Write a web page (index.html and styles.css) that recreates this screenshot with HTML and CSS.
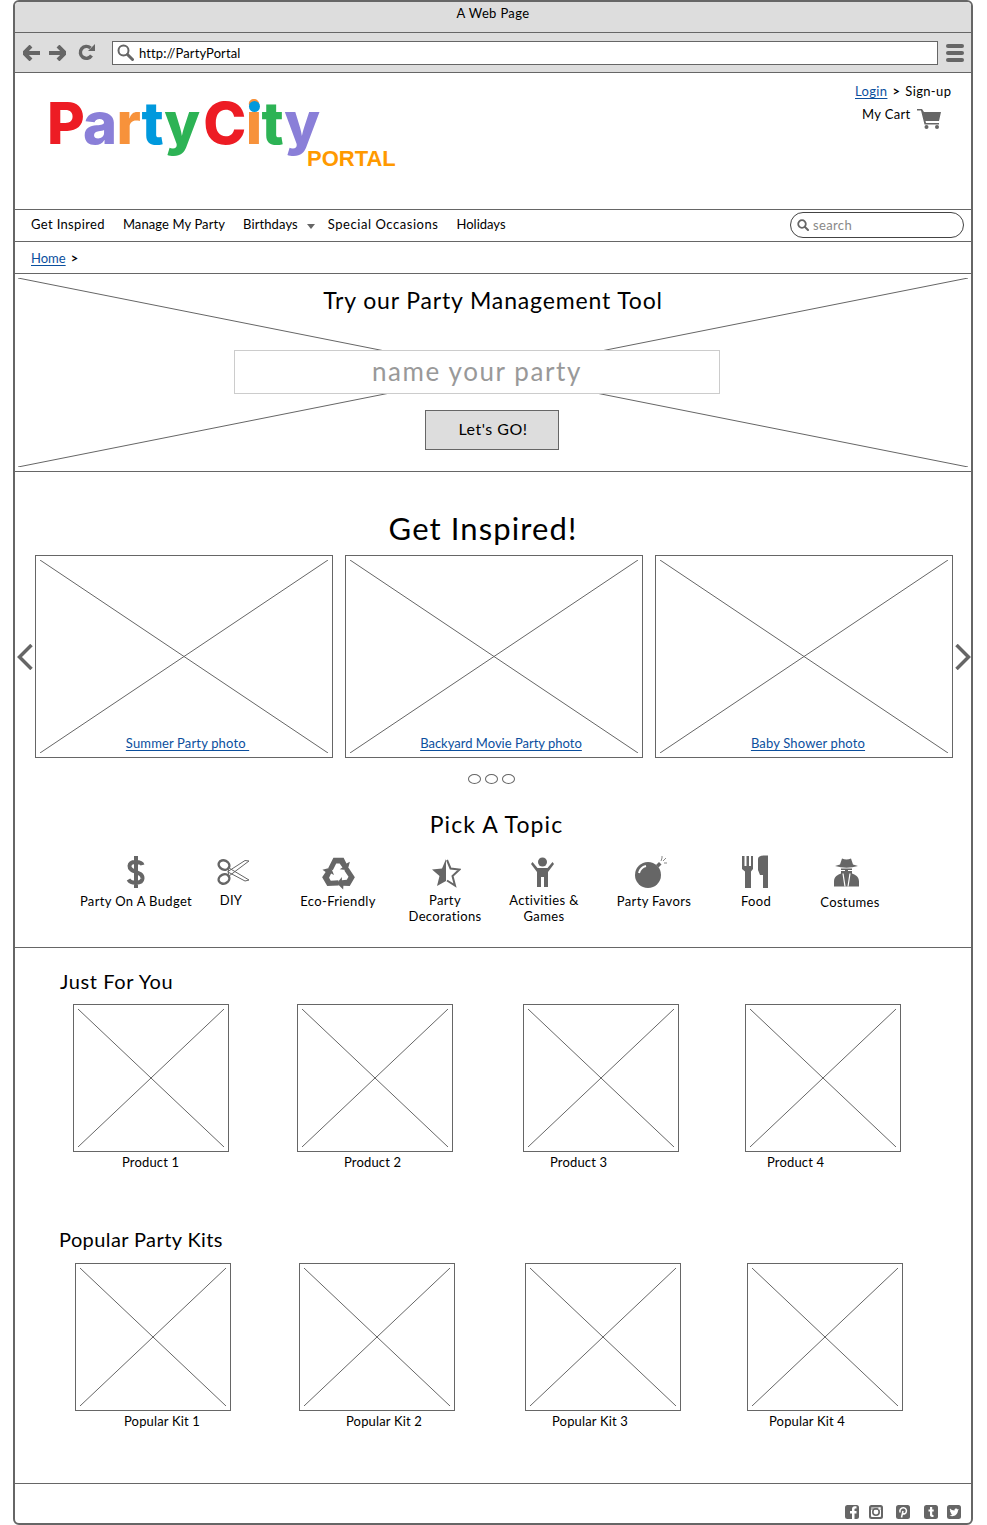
FILE: index.html
```html
<!DOCTYPE html>
<html lang="en">
<head>
    <meta charset="UTF-8">
    <title>PartyPortal</title>
    <link rel="stylesheet" href="styles.css">
</head>
<body>
    <div class="window">
        <div class="titlebar">A Web Page</div>
        <div class="toolbar">
            <svg class="tool-icon" width="18" height="16" viewBox="0 0 18 16"><path d="M8 1L1 8l7 7M2 8h15" fill="none" stroke="#666" stroke-width="4" stroke-linejoin="round"/></svg>
            <svg class="tool-icon" width="18" height="16" viewBox="0 0 18 16"><path d="M10 1l7 7-7 7M16 8H1" fill="none" stroke="#666" stroke-width="4" stroke-linejoin="round"/></svg>
            <svg class="tool-icon reload" width="17" height="17" viewBox="0 0 17 17"><path d="M13.5 11.5A6 6 0 1 1 12.5 4" fill="none" stroke="#666" stroke-width="3.4"/><path d="M10 7h7V0z" fill="#666"/></svg>
            <div class="urlbar">
                <svg width="17" height="17" viewBox="0 0 17 17"><circle cx="6.5" cy="6.5" r="5" fill="none" stroke="#666" stroke-width="2"/><path d="M10.5 10.5l5 5" stroke="#666" stroke-width="3" stroke-linecap="round"/></svg>
                <span>http://PartyPortal</span>
            </div>
            <div class="hamburger"><i></i><i></i><i></i></div>
        </div>

        <header class="site-header">
            <div class="logo">
                <div class="logo-name"><span class="red">P</span><span class="purple">a</span><span class="orange">r</span><span class="blue">t</span><span class="green">y</span><span class="red gap-c">C</span><span class="orange dot-i">i</span><span class="green">t</span><span class="purple">y</span></div>
                <div class="logo-portal">PORTAL</div>
            </div>
            <div class="account">
                <div class="account-login"><a href="#">Login</a><span class="crumb-sep">&gt;</span><span>Sign-up</span></div>
                <div class="account-cart">
                    <span>My Cart</span>
                    <svg width="24" height="21" viewBox="0 0 24 21"><path d="M0 1h5l2 3h17l-2 9H8.500l.5 2h13v1.500H7.500L4 2.500H0z" fill="#666"/><circle cx="9.500" cy="19" r="2" fill="#666"/><circle cx="20" cy="19" r="2" fill="#666"/></svg>
                </div>
            </div>
        </header>

        <nav class="mainnav">
            <a href="#">Get Inspired</a>
            <a href="#">Manage My Party</a>
            <a href="#" class="has-caret">Birthdays</a>
            <a href="#">Special Occasions</a>
            <a href="#">Holidays</a>
            <div class="search">
                <svg width="12" height="12" viewBox="0 0 12 12"><circle cx="5" cy="5" r="3.800" fill="none" stroke="#666" stroke-width="1.800"/><path d="M8 8l3 3" stroke="#666" stroke-width="2" stroke-linecap="round"/></svg>
                <span>search</span>
            </div>
        </nav>

        <div class="breadcrumb"><a href="#">Home</a><span class="crumb-sep">&gt;</span></div>

        <section class="hero">
            <svg class="hero-x" viewBox="0 0 100 100" preserveAspectRatio="none"><path d="M0 0L100 100M100 0L0 100" vector-effect="non-scaling-stroke"/></svg>
            <h2 class="hero-title">Try our Party Management Tool</h2>
            <div class="hero-input">name your party</div>
            <button type="button" class="hero-btn">Let's GO!</button>
        </section>

        <section class="inspired">
            <h1 class="inspired-title">Get Inspired!</h1>
            <div class="carousel">
                <svg class="arrow" width="17" height="26" viewBox="0 0 17 26"><path d="M15 1L3 13l12 12" fill="none" stroke="#666" stroke-width="3.500"/></svg>
                <div class="slides">
                    <div class="ph slide">
                        <svg viewBox="0 0 100 100" preserveAspectRatio="none"><path d="M0 0L100 100M100 0L0 100" vector-effect="non-scaling-stroke"/></svg>
                        <a href="#" class="slide-cap">Summer Party photo&nbsp;</a>
                    </div>
                    <div class="ph slide">
                        <svg viewBox="0 0 100 100" preserveAspectRatio="none"><path d="M0 0L100 100M100 0L0 100" vector-effect="non-scaling-stroke"/></svg>
                        <a href="#" class="slide-cap">Backyard Movie Party photo</a>
                    </div>
                    <div class="ph slide">
                        <svg viewBox="0 0 100 100" preserveAspectRatio="none"><path d="M0 0L100 100M100 0L0 100" vector-effect="non-scaling-stroke"/></svg>
                        <a href="#" class="slide-cap">Baby Shower photo</a>
                    </div>
                </div>
                <svg class="arrow" width="17" height="26" viewBox="0 0 17 26"><path d="M2 1l12 12L2 25" fill="none" stroke="#666" stroke-width="3.500"/></svg>
            </div>
            <div class="dots"><i></i><i></i><i></i></div>

            <h2 class="topic-title">Pick A Topic</h2>
            <div class="topics">
                <div class="topic">
                    <svg width="20" height="34" viewBox="0 0 20 34"><path d="M16.500 10C15.500 6.500 4 5 3.500 11c-.5 6.500 13.500 5 13 12.500C16 29 5 29 2.500 24.500M10 1v32" fill="none" stroke="#666" stroke-width="4"/></svg>
                    <span>Party On A Budget</span>
                </div>
                <div class="topic">
                    <svg class="scissors" width="34" height="28" viewBox="0 0 34 28"><ellipse cx="7" cy="7" rx="5.500" ry="4.500" fill="none" stroke="#666" stroke-width="2.400" transform="rotate(25 7 7)"/><ellipse cx="7" cy="21" rx="5.500" ry="4.500" fill="none" stroke="#666" stroke-width="2.400" transform="rotate(-25 7 21)"/><path d="M12 10l20 12-4 1-17-9zM12 18L32 3l-4-.5-17 11z" fill="#fff" stroke="#666"/></svg>
                    <span>DIY</span>
                </div>
                <div class="topic">
                    <svg width="33" height="31" viewBox="2 1 29 29"><g fill="#666"><path id="recycle-arm" d="M7.500 12L12 3h9l2.500 5 3-1.500-2 7.500-7-1 2.500-1.500L17.500 8h-3l-3 6z"/><use href="#recycle-arm" transform="rotate(120 16.500 17)"/><use href="#recycle-arm" transform="rotate(240 16.500 17)"/></g></svg>
                    <span>Eco-Friendly</span>
                </div>
                <div class="topic">
                    <svg width="31" height="30" viewBox="0 0 31 30"><path d="M16 2l-4 9.500-10 1 7.500 6.500L7 29l9-5z" fill="#666"/><path d="M17 3l3.500 8.500 9 1-7 6.500 2.500 9.500-8-5" fill="none" stroke="#666" stroke-width="2"/></svg>
                    <span>Party<br>Decorations</span>
                </div>
                <div class="topic">
                    <svg class="person" width="23" height="30" viewBox="0 0 23 30"><circle cx="11.500" cy="5" r="4.500" fill="#666"/><path d="M1.500 5l5 6h10l5-6 1.500 2-6 8v15h-4V20h-3v10h-4V15L0 7z" fill="#666"/></svg>
                    <span>Activities &amp;<br>Games</span>
                </div>
                <div class="topic">
                    <svg class="bomb" width="34" height="34" viewBox="0 0 34 34"><circle cx="14" cy="20" r="13" fill="#666"/><path d="M5 18c1-4 3-6 7-7" fill="none" stroke="#fff" stroke-width="2"/><path d="M22 10l3-3 2.500 2.500-3 3z" fill="#666"/><path d="M27 6l1-3M29 6l3-3M30 8h3M28 1v2" stroke="#888"/></svg>
                    <span>Party Favors</span>
                </div>
                <div class="topic">
                    <svg class="food" width="27" height="34" viewBox="0 0 27 34"><path d="M0 1h2.500v10h2V1h2.500v10h2V1H11v13l-2 2.500V33H3V16.500L0 14zM16 15V4c0-2 2-3.500 6-3.500h4V33h-5V20h-3z" fill="#666"/></svg>
                    <span>Food</span>
                </div>
                <div class="topic">
                    <svg class="spy" width="27" height="31" viewBox="0 0 27 31"><path d="M7 8L9 2q4.500 2 9 0l2 6 5 1.500Q13.500 13 2 9.500zM1 30v-5c0-5 4-7 7-8v-5h11v5c3 1 7 3 7 8v5z" fill="#666"/><path d="M10 17l2 13M17 17l-2 13M8 14h4M15 14h4" fill="none" stroke="#fff" stroke-width="1.200"/></svg>
                    <span>Costumes</span>
                </div>
            </div>
        </section>

        <section class="products">
            <h2 class="row-title">Just For You</h2>
            <div class="product-row">
                <div class="product"><div class="ph"><svg viewBox="0 0 100 100" preserveAspectRatio="none"><path d="M0 0L100 100M100 0L0 100" vector-effect="non-scaling-stroke"/></svg></div><p>Product 1</p></div>
                <div class="product"><div class="ph"><svg viewBox="0 0 100 100" preserveAspectRatio="none"><path d="M0 0L100 100M100 0L0 100" vector-effect="non-scaling-stroke"/></svg></div><p>Product 2</p></div>
                <div class="product"><div class="ph"><svg viewBox="0 0 100 100" preserveAspectRatio="none"><path d="M0 0L100 100M100 0L0 100" vector-effect="non-scaling-stroke"/></svg></div><p>Product 3</p></div>
                <div class="product"><div class="ph"><svg viewBox="0 0 100 100" preserveAspectRatio="none"><path d="M0 0L100 100M100 0L0 100" vector-effect="non-scaling-stroke"/></svg></div><p>Product 4</p></div>
            </div>
            <h2 class="row-title kits-title">Popular Party Kits</h2>
            <div class="product-row kits">
                <div class="product"><div class="ph"><svg viewBox="0 0 100 100" preserveAspectRatio="none"><path d="M0 0L100 100M100 0L0 100" vector-effect="non-scaling-stroke"/></svg></div><p>Popular Kit 1</p></div>
                <div class="product"><div class="ph"><svg viewBox="0 0 100 100" preserveAspectRatio="none"><path d="M0 0L100 100M100 0L0 100" vector-effect="non-scaling-stroke"/></svg></div><p>Popular Kit 2</p></div>
                <div class="product"><div class="ph"><svg viewBox="0 0 100 100" preserveAspectRatio="none"><path d="M0 0L100 100M100 0L0 100" vector-effect="non-scaling-stroke"/></svg></div><p>Popular Kit 3</p></div>
                <div class="product"><div class="ph"><svg viewBox="0 0 100 100" preserveAspectRatio="none"><path d="M0 0L100 100M100 0L0 100" vector-effect="non-scaling-stroke"/></svg></div><p>Popular Kit 4</p></div>
            </div>
        </section>

        <footer class="site-footer">
            <svg width="14" height="14" viewBox="0 0 14 14"><rect width="14" height="14" rx="2.500" fill="#666"/><path d="M9.500 14V8.500h2V6h-2V4.500c0-.7.3-1 1-1h1V1.200H9.800C8 1.200 7 2.300 7 4v2H5v2.500h2V14z" fill="#fff"/></svg>
            <svg width="14" height="14" viewBox="0 0 14 14"><rect width="14" height="14" rx="2.500" fill="#666"/><rect x="2" y="2" width="10" height="10" rx="1" fill="#fff"/><rect x="2" y="2" width="10" height="3" fill="#666" opacity=".5"/><circle cx="7" cy="7" r="3.200" fill="none" stroke="#666" stroke-width="1.600"/><rect x="9.500" y="2.500" width="2" height="2" fill="#fff"/></svg>
            <svg width="14" height="14" viewBox="0 0 14 14"><rect width="14" height="14" rx="2.500" fill="#666"/><path d="M5.500 12.500L7 6M4.200 7.500C3 5 5 2.800 7.300 2.800c2.500 0 3.500 2 3 4-.4 1.800-2.400 2.800-3.800 1.400" fill="none" stroke="#fff" stroke-width="1.500"/></svg>
            <svg width="14" height="14" viewBox="0 0 14 14"><rect width="14" height="14" rx="2.500" fill="#666"/><path d="M6 2v2.500H4.500v2H6v3.500c0 1.500 1 2 3.500 2v-2c-1 0-1.300-.2-1.300-1V6.500h1.500v-2H8.200V2z" fill="#fff"/></svg>
            <svg width="14" height="14" viewBox="0 0 14 14"><rect width="14" height="14" rx="2.500" fill="#666"/><path d="M2.500 10.500c3 1.500 8 .5 8.500-5l1-1.300-1.300.2c-.7-1.400-3.500-1-3.200 1C5.500 5.400 4 4.700 3 3.500 2.500 4.500 3 5.700 3.800 6.200L3 6c0 1 .7 1.800 1.700 2.200h-1c.3.800 1 1.200 1.800 1.300-.8.600-1.800 1-3 1z" fill="#fff"/></svg>
        </footer>
    </div>
</body>
</html>
```

FILE: styles.css
```css
* {
    box-sizing: border-box;
}
body {
    margin: 0;
    background-color: #fff;
    font-family: Lato, "Open Sans", sans-serif;
    font-size: 13px;
    letter-spacing: 0.35px;
    color: #000;
}
a {
    color: #0b4f9e;
    text-underline-offset: 2px;
}
h1, h2, p {
    margin: 0;
    font-weight: 400;
}
.window {
    width: 960px;
    height: 1525px;
    margin-left: 13px;
    border: 2px solid #666;
    border-radius: 6px;
    overflow: hidden;
}

/* browser chrome */
.titlebar {
    height: 31px;
    padding-top: 3px;
    background-color: #ddd;
    border-bottom: 1px solid #666;
    text-align: center;
}
.toolbar {
    display: flex;
    align-items: center;
    height: 40px;
    padding: 0 7px 0 8px;
    background-color: #ddd;
    border-bottom: 1px solid #666;
}
.tool-icon {
    margin-right: 7px;
}
.reload {
    margin: 0 17px 0 5px;
}
.urlbar {
    display: flex;
    align-items: center;
    gap: 5px;
    width: 826px;
    height: 24px;
    padding-left: 4px;
    background-color: #fff;
    border: 1px solid #666;
    letter-spacing: 0.1px;
}
.hamburger {
    display: flex;
    flex-direction: column;
    gap: 3px;
    margin-left: 8px;
}
.hamburger i {
    display: block;
    width: 18px;
    height: 4px;
    border-radius: 2px;
    background-color: #666;
}

/* header */
.site-header {
    display: flex;
    justify-content: space-between;
    height: 137px;
    border-bottom: 1px solid #666;
}
.logo {
    padding: 15px 0 0 32px;
}
.logo-name {
    font-family: Inter, sans-serif;
    font-weight: 800;
    font-size: 58px;
    line-height: 70px;
    letter-spacing: -0.7px;
}
.logo-name .gap-c {
    margin-left: 4px;
}
.red { color: #ed1c24; }
.purple { color: #8a7fd8; }
.orange { color: #f7923b; }
.blue { color: #0099dd; }
.green { color: #2db355; }
.dot-i {
    position: relative;
}
.dot-i::before {
    content: "";
    position: absolute;
    top: 13px;
    left: 3px;
    width: 11px;
    height: 11px;
    border-radius: 50%;
    background-color: #0099dd;
}
.logo-portal {
    margin: -11px 0 0 260px;
    font-family: "Liberation Sans", sans-serif;
    font-weight: 700;
    font-size: 22px;
    line-height: 24px;
    letter-spacing: 0;
    color: #ff9900;
}
.account {
    width: 116px;
    padding-top: 10px;
}
.crumb-sep {
    margin: 0 5px;
    font-weight: 700;
}
.account-cart {
    display: flex;
    align-items: flex-start;
    gap: 6px;
    margin: 7px 0 0 7px;
}
.account-cart svg {
    margin-top: 2px;
}

/* nav */
.mainnav {
    display: flex;
    align-items: center;
    height: 32px;
    padding: 0 7px 4px 16px;
    border-bottom: 1px solid #666;
}
.mainnav a {
    margin-right: 18px;
    color: #000;
    text-decoration: none;
}
.mainnav a:nth-child(2) { letter-spacing: 0.1px; }
.mainnav a:nth-child(3) { letter-spacing: 0.1px; }
.mainnav a:nth-child(4) { letter-spacing: 0.55px; }
.mainnav a:nth-child(5) { letter-spacing: 0; }
.mainnav .has-caret {
    position: relative;
    margin-right: 13px;
    padding-right: 17px;
}
.has-caret::after {
    content: "";
    position: absolute;
    right: 0;
    top: 8px;
    border: 4.500px solid transparent;
    border-top: 5px solid #666;
}
.search {
    display: flex;
    align-items: center;
    gap: 4px;
    width: 174px;
    height: 26px;
    margin: 2px 0 0 auto;
    padding-left: 6px;
    border: 1px solid #444;
    border-radius: 13px;
    color: #888;
}
.breadcrumb {
    display: flex;
    align-items: center;
    height: 32px;
    padding-left: 16px;
    border-bottom: 1px solid #666;
    letter-spacing: 0;
}

/* hero */
.hero {
    position: relative;
    display: flex;
    flex-direction: column;
    align-items: center;
    height: 198px;
    border-bottom: 1px solid #666;
}
.hero-x {
    position: absolute;
    top: 4px;
    left: 3px;
    width: 950px;
    height: 189px;
}
.hero-x path, .ph path {
    fill: none;
    stroke: #666;
    stroke-width: 1px;
}
.hero-title, .hero-input, .hero-btn {
    position: relative;
}
.hero-title {
    margin-top: 11px;
    font-size: 23px;
    line-height: 30px;
    letter-spacing: 0.85px;
}
.hero-input {
    width: 486px;
    height: 44px;
    margin: 35px 0 0 -32px;
    background-color: #fff;
    border: 1px solid #ccc;
    color: #999;
    font-size: 26px;
    line-height: 41px;
    letter-spacing: 1.6px;
    text-align: center;
}
.hero-btn {
    width: 134px;
    height: 40px;
    margin: 16px 0 0 -2px;
    padding: 0 0 4px 2px;
    background-color: #ddd;
    border: 1px solid #666;
    font-family: inherit;
    font-size: 16px;
    letter-spacing: 0.5px;
}

/* get inspired */
.inspired {
    height: 476px;
    border-bottom: 1px solid #666;
}
.inspired-title {
    padding: 36px 20px 0 0;
    height: 83px;
    font-size: 31px;
    line-height: 40px;
    letter-spacing: 1.1px;
    text-align: center;
}
.carousel {
    display: flex;
    align-items: center;
}
.arrow {
    flex: none;
    width: 20px;
}
.slides {
    display: flex;
    gap: 12px;
}
.ph {
    padding: 4px;
    border: 1px solid #666;
}
.ph svg {
    display: block;
    width: 100%;
    height: 100%;
}
.slide {
    position: relative;
    width: 298px;
    height: 203px;
}
.slide-cap {
    position: absolute;
    left: 7px;
    right: 0;
    bottom: 6px;
    margin: 0 auto;
    width: max-content;
    letter-spacing: 0.15px;
}
.slide:nth-child(2) .slide-cap {
    left: 14px;
    letter-spacing: 0;
}
.slide:nth-child(3) .slide-cap { left: 8px; }
.dots {
    display: flex;
    justify-content: center;
    gap: 4px;
    padding-right: 3px;
    margin-top: 16px;
}
.dots i {
    display: block;
    width: 13px;
    height: 10px;
    border: 1px solid #666;
    border-radius: 50%;
}
.topic-title {
    margin-top: 25px;
    padding-left: 7px;
    font-size: 23px;
    line-height: 30px;
    letter-spacing: 1.1px;
    text-align: center;
}
.topics {
    display: grid;
    grid-template-columns: 112px 78px 136px 78px 120px 100px 104px 84px;
    margin: 15px 0 0 65px;
}
.topic {
    display: flex;
    flex-direction: column;
    align-items: center;
    text-align: center;
    line-height: 16px;
}
.topic svg {
    height: 36px;
    margin-bottom: 2px;
}
.topic span {
    white-space: nowrap;
}
.topic:nth-child(1) span,
.topic:nth-child(3) span,
.topic:nth-child(6) span,
.topic:nth-child(7) span {
    margin-top: 1px;
}
.topic:nth-child(8) span {
    margin-top: 2px;
}
.topic .scissors { margin-left: 6px; }
.topic .person { margin-right: 4px; }
.topic .bomb { margin-right: 6px; }
.topic .food { margin-right: 2px; }
.topic .spy { margin-right: 8px; }

/* product rows */
.products {
    height: 536px;
    padding-top: 21px;
    border-bottom: 1px solid #666;
}
.row-title {
    margin-left: 45px;
    font-size: 20px;
    line-height: 24px;
    letter-spacing: 0.6px;
}
.kits-title {
    margin: 56px 0 0 44px;
    letter-spacing: 0.4px;
}
.product-row {
    display: grid;
    grid-template-columns: 224px 226px 222px 156px;
    margin: 11px 0 0 58px;
}
.product-row.kits {
    margin: 12px 0 0 60px;
}
.product .ph {
    width: 156px;
    height: 148px;
}
.product p {
    margin-top: 1px;
    line-height: 18px;
    letter-spacing: 0.15px;
}
.product:nth-child(1) p { padding-left: 49px; }
.product:nth-child(2) p { padding-left: 47px; }
.product:nth-child(3) p { padding-left: 27px; }
.product:nth-child(4) p { padding-left: 22px; }

/* footer */
.site-footer {
    display: flex;
    align-items: flex-end;
    justify-content: flex-end;
    gap: 10px;
    height: 39px;
    padding: 0 10px 4px 0;
}
.site-footer svg:nth-child(3) { margin-left: 3px; }
.site-footer svg:nth-child(4) { margin-left: 4px; }
.site-footer svg:nth-child(5) { margin-left: -1px; }
```
